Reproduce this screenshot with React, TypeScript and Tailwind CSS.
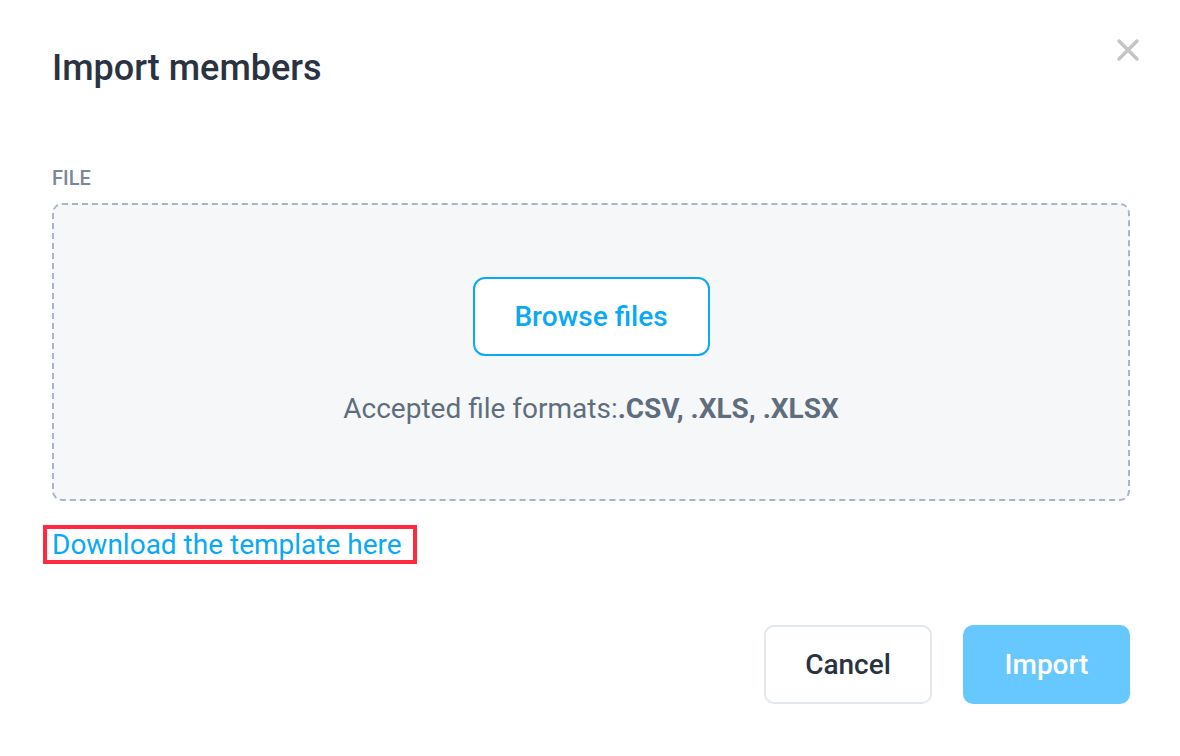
import { X } from 'lucide-react'

export default function App() {
  return (
    <div className="relative h-[756px] w-[1180px] bg-white font-['Roboto',sans-serif]">
      <button className="absolute right-[34px] top-[32px] text-[#c4c4c4]">
        <X size={36} strokeWidth={2.3} />
      </button>

      <div className="pl-[52px] pr-[50px] pt-[46px]">
        <h1 className="text-[36px] font-medium leading-[44px] text-[#2a3342]">
          Import members
        </h1>

        <p className="mt-[76px] text-[20px] font-medium uppercase leading-[24px] text-[#7a8899]">
          File
        </p>

        <div className="mt-[13px] flex h-[298px] flex-col items-center rounded-[10px] border-2 border-dashed border-[#a9b6c8] bg-[#f6f7f9] pt-[72px]">
          <button className="h-[79px] w-[237px] rounded-[12px] border-2 border-[#0aa9f5] bg-white text-[28px] font-medium text-[#0aa9f5]">
            Browse files
          </button>
          <p className="mt-[36px] text-[28px] leading-[33px] text-[#5f6e7e]">
            Accepted file formats:<span className="font-bold">.CSV, .XLS, .XLSX</span>
          </p>
        </div>

        <div className="mt-[24px] flex">
          <a className="-ml-[9px] border-[4px] border-[#ff2a40] pl-[5px] pr-[11px] text-[28px] leading-[31px] text-[#0aa9f5]">
            Download the template here
          </a>
        </div>

        <div className="mt-[61px] flex justify-end gap-[31px]">
          <button className="h-[79px] w-[168px] rounded-[10px] border-2 border-[#e3e8f0] bg-white text-[28px] font-medium text-[#2a3342]">
            Cancel
          </button>
          <button className="h-[79px] w-[167px] rounded-[10px] bg-[#67c8ff] text-[28px] font-medium text-white">
            Import
          </button>
        </div>
      </div>
    </div>
  )
}
